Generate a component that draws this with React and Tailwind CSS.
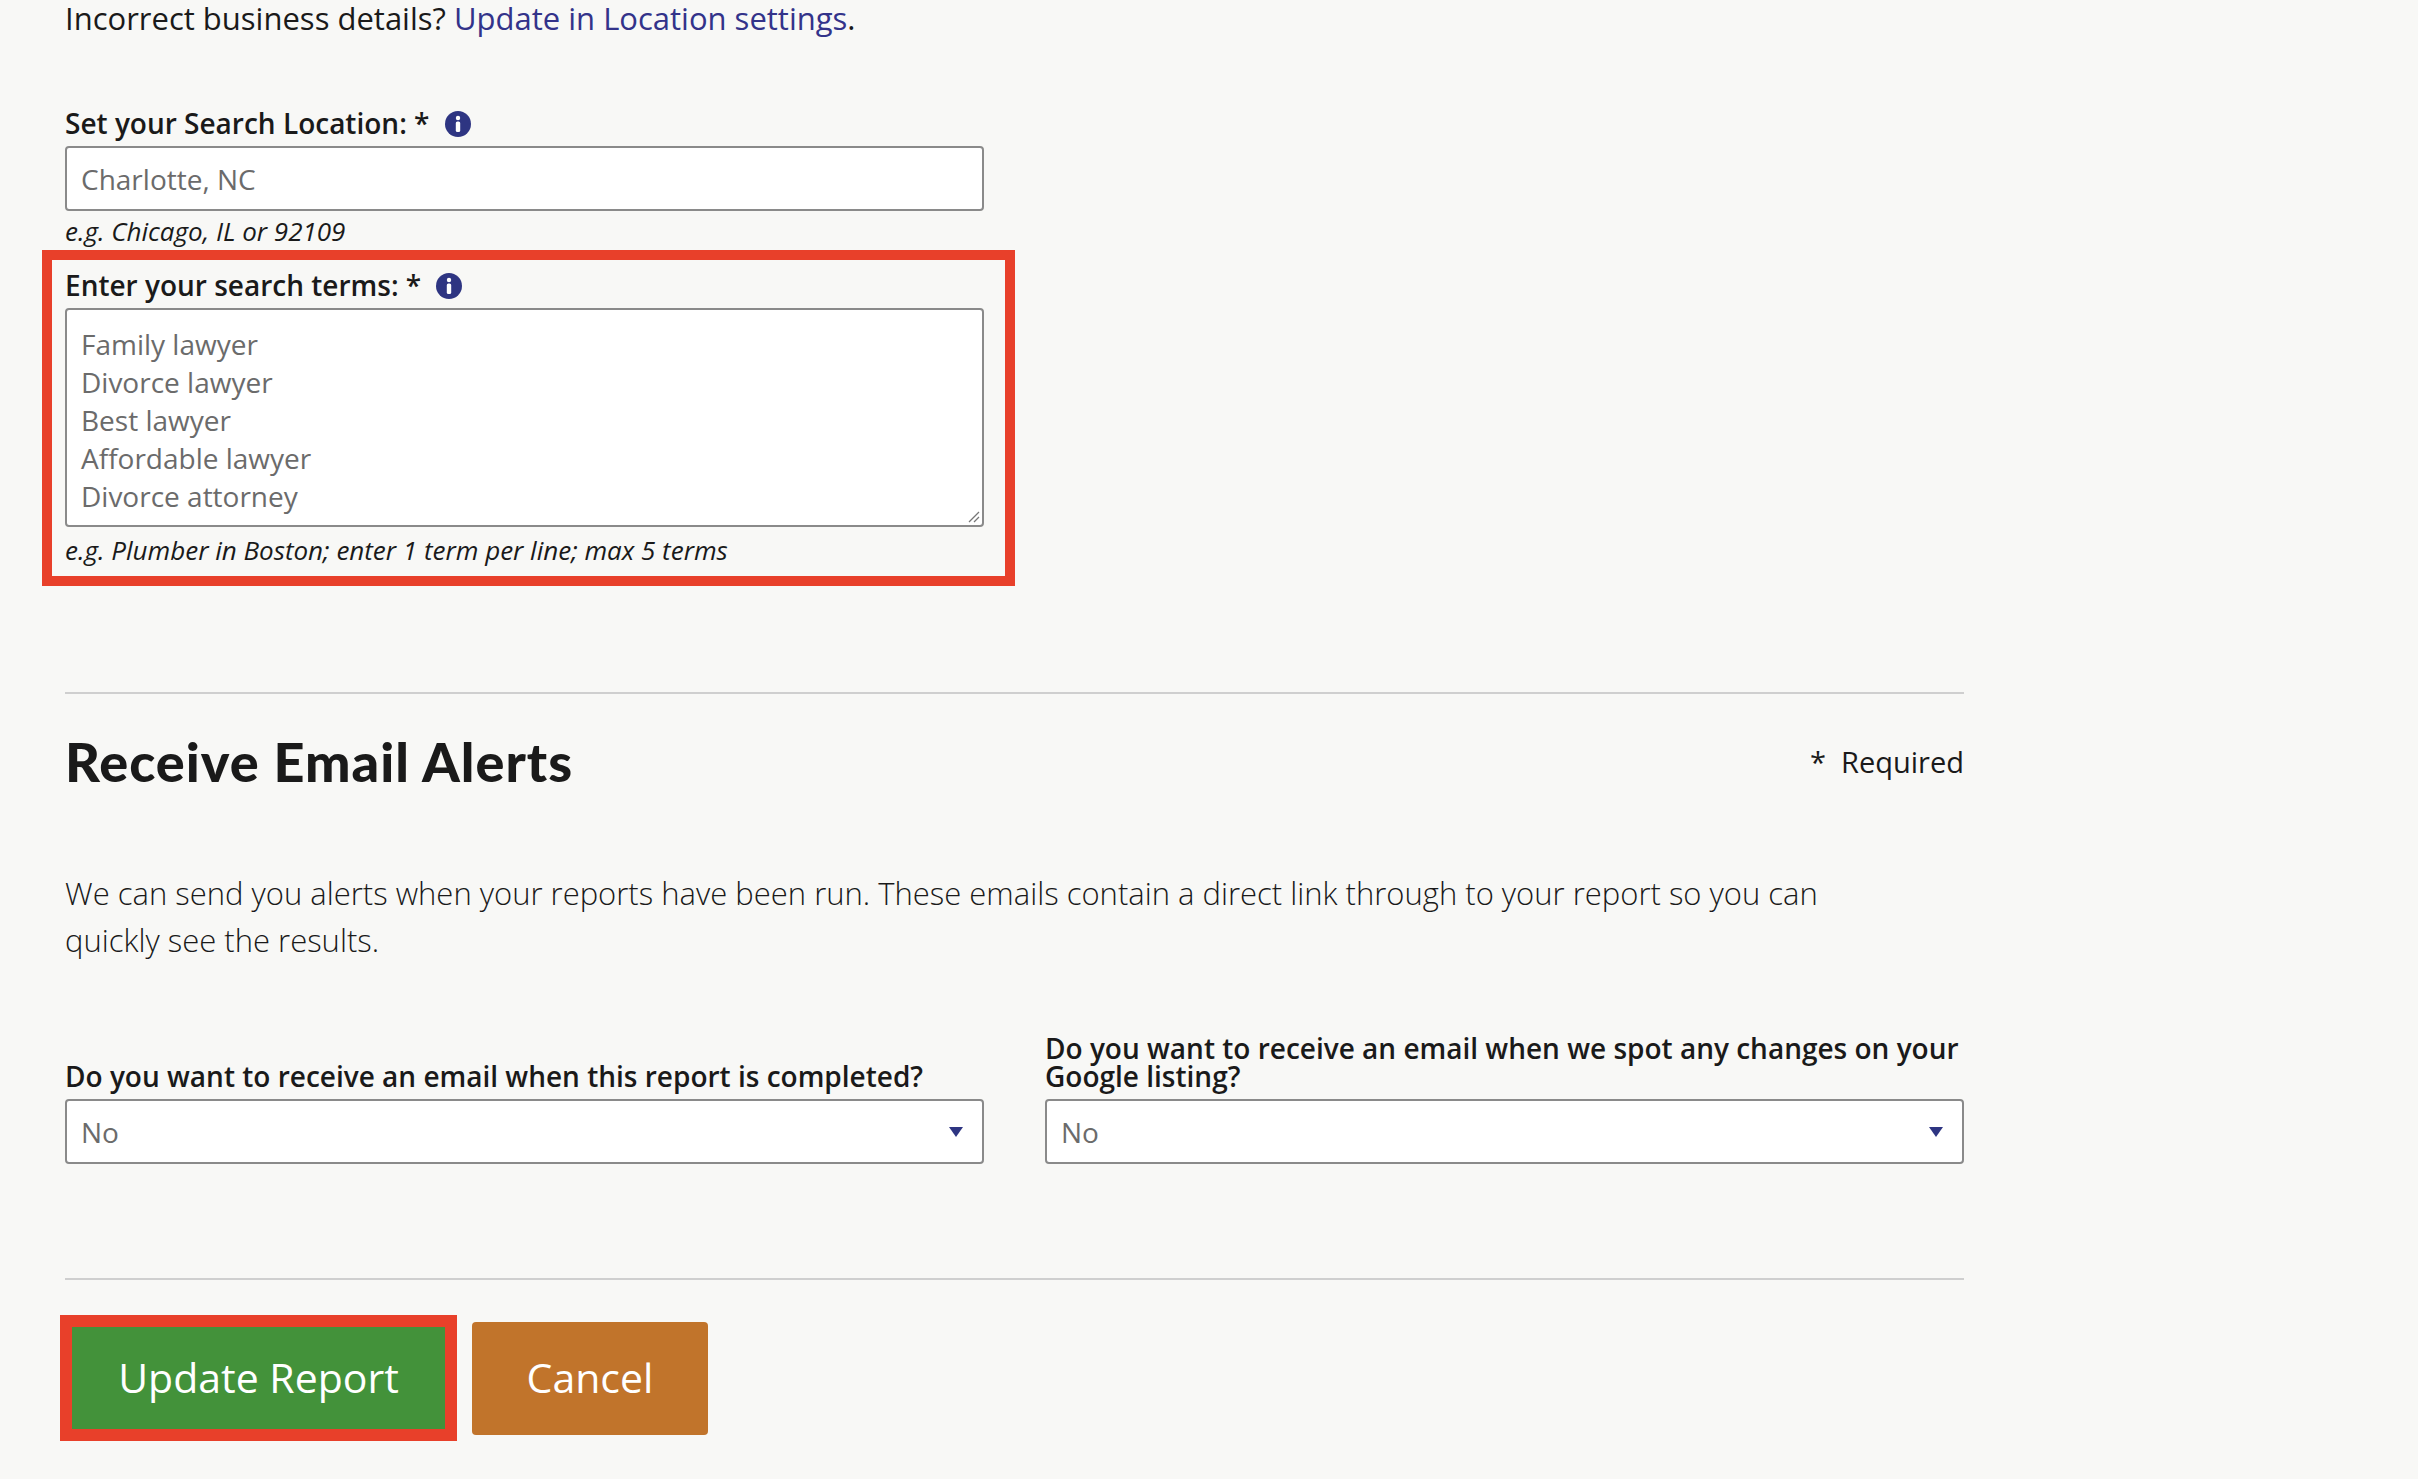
export default function App() {
  const font = { fontFamily: '"Open Sans", "Liberation Sans", sans-serif' };

  const Info = () => (
    <svg width="26" height="26" viewBox="0 0 26 26" className="inline-block ml-[8px] -mt-[6px]">
      <circle cx="13" cy="13" r="13" fill="#2e3582" />
      <circle cx="13" cy="7" r="2.2" fill="#fff" />
      <rect x="10.8" y="10.5" width="4.4" height="10.5" rx="1.6" fill="#fff" />
    </svg>
  );

  const Caret = () => (
    <svg width="16" height="12" viewBox="0 0 16 12">
      <path d="M1 1 L15 1 L8 11 Z" fill="#2e3582" />
    </svg>
  );

  return (
    <div className="min-h-screen w-full bg-[#f8f8f6] text-[#1a1a1a]" style={font}>
      <div className="pl-[65px] w-[1964px]">
        <p className="text-[31px] leading-[36px]">
          Incorrect business details? <span className="text-[#33338a]">Update in Location settings</span>.
        </p>

        <div className="mt-[69px] text-[28px] leading-[36px] font-semibold">
          Set your Search Location: * <Info />
        </div>
        <div className="mt-[5px] w-[919px] h-[65px] bg-white border-2 border-[#8a8a8a] rounded-[4px] flex items-center px-[14px] text-[28px] text-[#6b6b6b]">
          Charlotte, NC
        </div>
        <div className="mt-[5px] text-[26px] leading-[30px] italic">e.g. Chicago, IL or 92109</div>

        <div className="mt-[4px] -ml-[23px] w-[973px] border-[10px] border-[#e8402a] pl-[13px] pt-[7px] pb-[11px]">
          <div className="text-[28px] leading-[36px] font-semibold">
            Enter your search terms: * <Info />
          </div>
          <div className="relative mt-[5px] w-[919px] h-[219px] bg-white border-2 border-[#8a8a8a] rounded-[4px] px-[14px] pt-[15px] text-[28px] leading-[38px] text-[#6b6b6b]">
            <div>Family lawyer</div>
            <div>Divorce lawyer</div>
            <div>Best lawyer</div>
            <div>Affordable lawyer</div>
            <div>Divorce attorney</div>
            <svg width="14" height="14" viewBox="0 0 14 14" className="absolute right-[2px] bottom-[2px]">
              <path d="M13 3 L3 13 M13 8 L8 13" stroke="#777" strokeWidth="1.3" />
            </svg>
          </div>
          <div className="mt-[8px] text-[26px] leading-[30px] italic">
            e.g. Plumber in Boston; enter 1 term per line; max 5 terms
          </div>
        </div>

        <div className="mt-[106px] border-t-2 border-[#cfcfcf]" />

        <div className="mt-[38px] flex items-center justify-between">
          <h2 className="text-[54px] leading-[60px] font-black tracking-[1px]" style={{ fontFamily: 'Lato, "Open Sans", sans-serif' }}>
            Receive Email Alerts
          </h2>
          <span className="text-[29px]">*&nbsp; Required</span>
        </div>

        <p className="mt-[78px] text-[31px] leading-[47px] font-light">
          We can send you alerts when your reports have been run. These emails contain a direct link through to your report so you can
          <br />
          quickly see the results.
        </p>

        <div className="mt-[70px] grid grid-cols-[919px_919px] gap-x-[61px]">
          {[
            "Do you want to receive an email when this report is completed?",
            "Do you want to receive an email when we spot any changes on your Google listing?",
          ].map((q) => (
            <div key={q} className="flex flex-col justify-end">
              <div className="text-[28px] leading-[28px] font-semibold">{q}</div>
              <div className="mt-[9px] h-[65px] bg-white border-2 border-[#8a8a8a] rounded-[4px] flex items-center justify-between pl-[14px] pr-[18px] text-[28px] text-[#6b6b6b]">
                No
                <Caret />
              </div>
            </div>
          ))}
        </div>

        <div className="mt-[114px] border-t-2 border-[#cfcfcf]" />

        <div className="mt-[35px] -ml-[5px] flex items-center">
          <div className="border-[12px] border-[#e8402a]">
            <div className="w-[373px] h-[102px] bg-[#43923a] text-white text-[41px] flex items-center justify-center">
              Update Report
            </div>
          </div>
          <div className="ml-[15px] w-[236px] h-[113px] rounded-[4px] bg-[#c1742b] text-white text-[41px] flex items-center justify-center">
            Cancel
          </div>
        </div>
      </div>
    </div>
  );
}
